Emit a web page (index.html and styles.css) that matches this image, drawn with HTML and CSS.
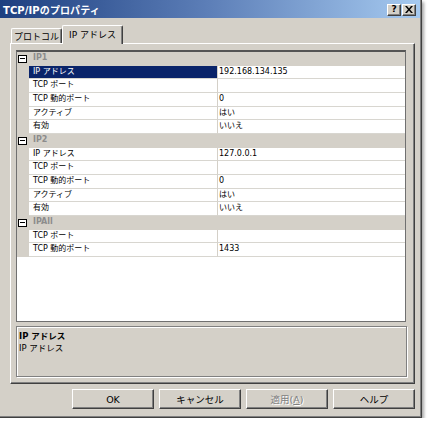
FILE: index.html
```html
<!DOCTYPE html>
<html lang="ja">
<head>
<meta charset="utf-8">
<title>TCP/IPのプロパティ</title>
<link rel="stylesheet" href="styles.css">
</head>
<body>
<div class="window">
  <div class="titlebar">
    <span class="title">TCP/IPのプロパティ</span>
    <div class="caption-btns">
      <span class="cbtn help">?</span>
      <span class="cbtn close">
        <svg width="8" height="7" viewBox="0 0 8 7"><path d="M0 0h2l2 2.5L6 0h2L5 3.5 8 7H6L4 4.5 2 7H0l3-3.5z" fill="#000"/></svg>
      </span>
    </div>
  </div>
  <div class="body">
    <div class="tabs">
      <div class="tab">プロトコル</div>
      <div class="tab active">IP アドレス</div>
    </div>
    <div class="panel">
      <div class="grid">
        <div class="row cat"><span class="gut"><span class="toggle"></span></span><span class="cat-name">IP1</span></div>
        <div class="row sel"><span class="gut"></span><span class="name">IP アドレス</span><span class="val">192.168.134.135</span></div>
        <div class="row"><span class="gut"></span><span class="name">TCP ポート</span><span class="val"></span></div>
        <div class="row"><span class="gut"></span><span class="name">TCP 動的ポート</span><span class="val">0</span></div>
        <div class="row"><span class="gut"></span><span class="name">アクティブ</span><span class="val">はい</span></div>
        <div class="row"><span class="gut"></span><span class="name">有効</span><span class="val">いいえ</span></div>
        <div class="row cat"><span class="gut"><span class="toggle"></span></span><span class="cat-name">IP2</span></div>
        <div class="row"><span class="gut"></span><span class="name">IP アドレス</span><span class="val">127.0.0.1</span></div>
        <div class="row"><span class="gut"></span><span class="name">TCP ポート</span><span class="val"></span></div>
        <div class="row"><span class="gut"></span><span class="name">TCP 動的ポート</span><span class="val">0</span></div>
        <div class="row"><span class="gut"></span><span class="name">アクティブ</span><span class="val">はい</span></div>
        <div class="row"><span class="gut"></span><span class="name">有効</span><span class="val">いいえ</span></div>
        <div class="row cat"><span class="gut"><span class="toggle"></span></span><span class="cat-name">IPAll</span></div>
        <div class="row"><span class="gut"></span><span class="name">TCP ポート</span><span class="val"></span></div>
        <div class="row"><span class="gut"></span><span class="name">TCP 動的ポート</span><span class="val">1433</span></div>
      </div>
      <div class="desc">
        <div class="desc-title">IP アドレス</div>
        <div class="desc-text">IP アドレス</div>
      </div>
    </div>
    <div class="buttons">
      <button class="btn">OK</button>
      <button class="btn">キャンセル</button>
      <button class="btn disabled">適用(<u>A</u>)</button>
      <button class="btn">ヘルプ</button>
    </div>
  </div>
</div>
</body>
</html>
```

FILE: styles.css
```css
html, body {
  margin: 0;
  padding: 0;
  background: #fff;
}

body {
  font-family: "DejaVu Sans", "Noto Sans CJK JP", sans-serif;
  font-size: 8px;
  color: #000;
}

/* dialog frame */
.window {
  box-sizing: border-box;
  width: 422px;
  height: 418px;
  background: #d4d0c8;
  border-right: 1px solid #404040;
  border-bottom: 1px solid #404040;
  padding: 0 1px 1px 0;
  box-shadow: inset -1px -1px 0 #808080, 2px 2px 3px rgba(0, 0, 0, 0.35);
  display: flex;
  flex-direction: column;
}

/* caption */
.titlebar {
  height: 18px;
  flex: none;
  display: flex;
  align-items: center;
  justify-content: space-between;
  padding: 0 4px 0 3px;
  background: linear-gradient(to right, #1d3f80, #5d7fb8 50%, #a6caf0);
}

.title {
  color: #fff;
  font-weight: bold;
  font-size: 10px;
  letter-spacing: 0.1px;
}

.caption-btns {
  display: flex;
  gap: 1px;
  margin-top: 1px;
}

.cbtn {
  box-sizing: border-box;
  width: 14px;
  height: 12px;
  display: flex;
  align-items: center;
  justify-content: center;
  background: #d4d0c8;
  border: 1px solid;
  border-color: #fff #404040 #404040 #fff;
  box-shadow: inset -1px -1px 0 #808080;
  font-weight: bold;
  font-size: 9px;
  line-height: 1;
}

/* client area */
.body {
  flex: 1;
  display: flex;
  flex-direction: column;
  padding: 0 5px 0 10px;
}

.tabs {
  display: flex;
  align-items: flex-end;
  height: 18px;
  margin-top: 7px;
  padding-left: 1px;
}

.tab {
  box-sizing: border-box;
  width: 51px;
  height: 15px;
  display: flex;
  align-items: center;
  justify-content: center;
  font-size: 9px;
  background: #d4d0c8;
  border: 1px solid;
  border-bottom: none;
  border-color: #fff #404040 #404040 #fff;
  border-radius: 2px 2px 0 0;
  box-shadow: inset -1px 0 0 #808080;
}

.tab.active {
  width: 61px;
  height: 19px;
  margin-bottom: -1px;
  position: relative;
  z-index: 1;
  padding-bottom: 2px;
}

.panel {
  box-sizing: border-box;
  width: 405px;
  height: 341px;
  flex: none;
  border: 1px solid;
  border-color: #fff #404040 #404040 #fff;
  box-shadow: inset -1px -1px 0 #808080;
  padding: 6px 0 0 5px;
  display: flex;
  flex-direction: column;
}

/* property grid */
.grid {
  box-sizing: border-box;
  width: 390px;
  height: 272px;
  background: #fff;
  border-style: solid;
  border-width: 2px 1px 1px 1px;
  border-color: #555 #707070 #707070 #707070;
  display: flex;
  flex-direction: column;
}

.row {
  box-sizing: border-box;
  height: 13.67px;
  flex: none;
  display: grid;
  grid-template-columns: 12px 188px 1fr;
  line-height: 12px;
}

.gut {
  background: #d4d0c8;
  display: flex;
  align-items: center;
  justify-content: center;
}

.name, .val {
  border-bottom: 1px solid #d8d6d0;
  white-space: nowrap;
  overflow: hidden;
}

.name {
  padding-left: 4px;
}

.val {
  border-left: 1px solid #d4d0c8;
  padding-left: 1px;
}

.row.sel .name {
  background: #0a246a;
  color: #fff;
}

.row.cat {
  background: #d4d0c8;
}

.cat-name {
  grid-column: 2 / 4;
  padding-left: 4px;
  color: #8c8c8c;
  font-weight: bold;
}

.toggle {
  box-sizing: border-box;
  width: 9px;
  height: 8px;
  border: 1px solid #000;
  background: #fff;
  margin-left: -1px;
  display: flex;
  align-items: center;
  justify-content: center;
}

.toggle::before {
  content: "";
  width: 5px;
  height: 1px;
  background: #000;
}

/* description pane */
.desc {
  box-sizing: border-box;
  width: 391px;
  height: 51px;
  margin-top: 4px;
  border: 1px solid #808080;
  box-shadow: 1px 1px 0 #fff, inset 1px 1px 0 #fff;
  padding: 3px 0 0 2px;
  font-size: 8.5px;
  line-height: 12px;
}

.desc-title {
  font-weight: bold;
}

/* dialog buttons */
.buttons {
  display: flex;
  justify-content: flex-end;
  gap: 5px;
  margin-top: 5px;
}

.btn {
  box-sizing: border-box;
  width: 82px;
  height: 20px;
  padding: 0;
  font-family: "DejaVu Sans", "Noto Sans CJK JP", sans-serif;
  font-size: 9.5px;
  color: #000;
  background: #d4d0c8;
  border: 1px solid;
  border-color: #fff #404040 #404040 #fff;
  box-shadow: inset -1px -1px 0 #808080;
  border-radius: 0;
}

.btn.disabled {
  color: #808080;
  text-shadow: 1px 1px 0 #fff;
}
```
